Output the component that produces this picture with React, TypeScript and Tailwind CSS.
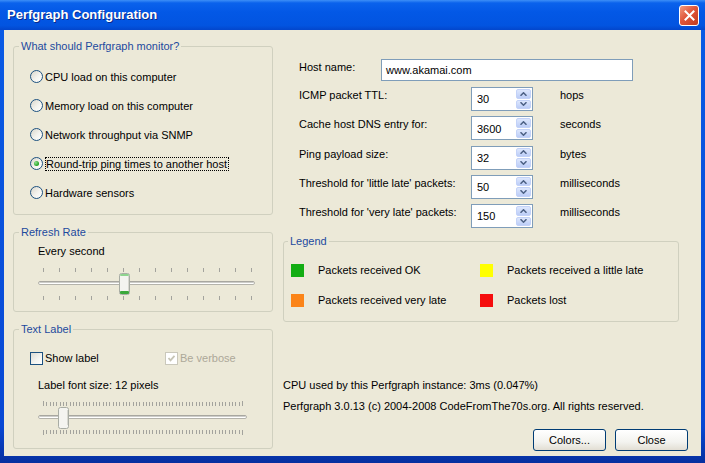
import React from 'react';

function Radio({ label, checked, focused }: { label: string; checked?: boolean; focused?: boolean }) {
  return (
    <div className="h-[29px] flex items-center gap-[2px] pl-[16px]">
      <span className="w-[13px] h-[13px] shrink-0 rounded-full border border-[#1c5180] bg-[linear-gradient(135deg,#d9d6cb,#f4f3ee_55%,#ffffff)] flex items-center justify-center">
        {checked && (
          <span className="w-[5px] h-[5px] rounded-full bg-[radial-gradient(circle_at_35%_35%,#8ee08e,#21a121_70%)]" />
        )}
      </span>
      {focused ? (
        <span className="border border-dotted border-black leading-[12px] pr-[1px]">{label}</span>
      ) : (
        <span className="leading-[14px]">{label}</span>
      )}
    </div>
  );
}

function Check({ label, checked, disabled }: { label: string; checked?: boolean; disabled?: boolean }) {
  return (
    <div className="flex items-center gap-[2px]">
      <span
        className={
          disabled
            ? 'w-[13px] h-[13px] shrink-0 border border-[#cac8bb] bg-white flex items-center justify-center'
            : 'w-[13px] h-[13px] shrink-0 border border-[#1c5180] bg-[linear-gradient(135deg,#dcdbd3,#f3f3ef_55%,#ffffff)] flex items-center justify-center'
        }
      >
        {checked && (
          <svg width="9" height="9" viewBox="0 0 9 9">
            <path d="M1.5 4 L3.5 6.3 L7.5 1.8" fill="none" stroke={disabled ? '#c7c5b6' : '#21a121'} strokeWidth="1.8" />
          </svg>
        )}
      </span>
      <span className={disabled ? 'text-[#aca899] leading-[14px]' : 'leading-[14px]'}>{label}</span>
    </div>
  );
}

function Trackbar({
  width,
  trackWidth,
  ticks,
  start,
  step,
  thumbX,
  plain,
}: {
  width: number;
  trackWidth: number;
  ticks: number;
  start: number;
  step: number;
  thumbX: number;
  plain?: boolean;
}) {
  const xs = Array.from({ length: ticks }, (_, i) => Math.round(start + i * step) + 0.5);
  return (
    <svg width={width} height={35} viewBox={`0 0 ${width} 35`} className="block">
      {xs.map((x, i) => {
        const end = i === 0 || i === ticks - 1;
        return (
          <g key={i} stroke="#a3a39d" strokeWidth="1">
            <line x1={x} y1={end && ticks > 20 ? 1 : 2} x2={x} y2={6} />
            <line x1={x} y1={30} x2={x} y2={end && ticks > 20 ? 35 : 34} />
          </g>
        );
      })}
      <rect x="0.5" y="15.5" width={trackWidth} height="3" rx="1.5" fill="#ffffff" stroke="#b4b3ab" />
      <line x1="1.5" y1="16" x2={trackWidth - 0.5} y2="16" stroke="#9c9b94" />
      <rect x={thumbX + 0.5} y="7.5" width="10" height="21" rx="2" fill="#f4f4f0" stroke="#a8aca4" />
      {!plain && <rect x={thumbX + 1} y="8" width="9" height="2" rx="1" fill="#8fd48f" />}
      {!plain && <rect x={thumbX + 1} y="25" width="9" height="3" rx="1" fill="#3ba83b" />}
      <line x1={thumbX + 9.5} y1="10" x2={thumbX + 9.5} y2="25" stroke="#d8d8d0" />
    </svg>
  );
}

function SpinBtn({ up }: { up?: boolean }) {
  return (
    <div className="flex-1 rounded-[2px] border border-[#c3d2f8] bg-[linear-gradient(to_bottom,#dde7fd,#bccdf7)] flex items-center justify-center">
      <svg width="7" height="4" viewBox="0 0 7 4">
        <path d={up ? 'M0.5 3.8 L3.5 0.8 L6.5 3.8' : 'M0.5 0.2 L3.5 3.2 L6.5 0.2'} fill="none" stroke="#4d6185" strokeWidth="1.5" />
      </svg>
    </div>
  );
}

function SpinRow({ label, value, unit }: { label: string; value: string; unit: string }) {
  return (
    <div className="h-[29.3px] flex items-start">
      <span className="w-[172px] pt-[1px] leading-[14px]">{label}</span>
      <div className="w-[62px] h-[24px] border border-[#7f9db9] bg-white flex">
        <span className="flex-1 pl-[5px] pt-[1px] flex items-center">{value}</span>
        <div className="w-[15px] mr-[1px] py-[1px] flex flex-col gap-[1px]">
          <SpinBtn up />
          <SpinBtn />
        </div>
      </div>
      <span className="ml-[27px] pt-[1px] leading-[14px]">{unit}</span>
    </div>
  );
}

function Swatch({ color, label, wide }: { color: string; label: string; wide?: boolean }) {
  return (
    <div className={wide ? 'w-[189px] flex items-center gap-[14px]' : 'flex items-center gap-[14px]'}>
      <span className={`w-[13px] h-[13px] shrink-0 ${color}`} />
      <span className="leading-[14px]">{label}</span>
    </div>
  );
}

export default function App() {
  return (
    <div className="w-[705px] h-[463px] flex flex-col overflow-hidden bg-[linear-gradient(to_bottom,#0a5ce6,#0848d4_92%,#062f9f)] font-['Liberation_Sans',Arial,sans-serif] text-[11px] text-black">
      {/* title bar */}
      <div className="h-[30px] shrink-0 flex items-center justify-between pl-[7px] pr-[6px] bg-[linear-gradient(to_bottom,#3d8ff7_0%,#0a62ec_10%,#0358e6_40%,#0254e0_85%,#0346cc_100%)]">
        <span className="text-white font-bold text-[13px] [text-shadow:1px_1px_0_#0a2a8a]">Perfgraph Configuration</span>
        <div className="w-[20px] h-[21px] rounded-[3px] border border-white bg-[linear-gradient(135deg,#f19b80,#e0563b_45%,#c33c1e)] flex items-center justify-center">
          <svg width="11" height="11" viewBox="0 0 11 11">
            <path d="M1.5 1.5 L9.5 9.5 M9.5 1.5 L1.5 9.5" stroke="white" strokeWidth="2" strokeLinecap="square" />
          </svg>
        </div>
      </div>

      {/* client area */}
      <div className="flex-1 mx-[4px] mb-[7px] bg-[#ece9d8] flex gap-[10px] pl-[9px] pt-[9px]">
        {/* left column */}
        <div className="w-[260px] flex flex-col gap-[10px]">
          <fieldset className="h-[176px] border border-[#d0d0bf] rounded-[3px]">
            <legend className="ml-[5px] px-[2px] leading-[14px] text-[#1d4a9e]">What should Perfgraph monitor?</legend>
            <div className="pt-[9px]">
              <Radio label="CPU load on this computer" />
              <Radio label="Memory load on this computer" />
              <Radio label="Network throughput via SNMP" />
              <Radio label="Round-trip ping times to another host" checked focused />
              <Radio label="Hardware sensors" />
            </div>
          </fieldset>

          <fieldset className="h-[87px] border border-[#d0d0bf] rounded-[3px]">
            <legend className="ml-[5px] px-[2px] leading-[14px] text-[#1d4a9e]">Refresh Rate</legend>
            <div className="pl-[24px] pt-[5px]">
              <div className="leading-[14px]">Every second</div>
              <div className="mt-[8px]">
                <Trackbar width={222} trackWidth={216} ticks={14} start={5} step={16} thumbX={81} />
              </div>
            </div>
          </fieldset>

          <fieldset className="h-[127px] border border-[#d0d0bf] rounded-[3px]">
            <legend className="ml-[5px] px-[2px] leading-[14px] text-[#1d4a9e]">Text Label</legend>
            <div className="pt-[15px]">
              <div className="pl-[16px] flex items-center">
                <div className="w-[135px]">
                  <Check label="Show label" />
                </div>
                <Check label="Be verbose" checked disabled />
              </div>
              <div className="pl-[24px] mt-[13px] leading-[14px]">Label font size: 12 pixels</div>
              <div className="pl-[24px] mt-[8px]">
                <Trackbar width={212} trackWidth={208} ticks={61} start={5} step={3.317} thumbX={20} plain />
              </div>
            </div>
          </fieldset>
        </div>

        {/* right column */}
        <div className="w-[405px] flex flex-col">
          <div className="pl-[16px] mt-[20px]">
            <div className="flex items-start">
              <span className="w-[82px] pt-[1px] leading-[14px]">Host name:</span>
              <div className="w-[252px] h-[22px] border border-[#7f9db9] bg-white px-[4px] flex items-center">www.akamai.com</div>
            </div>
            <div className="mt-[6px]">
              <SpinRow label="ICMP packet TTL:" value="30" unit="hops" />
              <SpinRow label="Cache host DNS entry for:" value="3600" unit="seconds" />
              <SpinRow label="Ping payload size:" value="32" unit="bytes" />
              <SpinRow label="Threshold for 'little late' packets:" value="50" unit="milliseconds" />
              <SpinRow label="Threshold for 'very late' packets:" value="150" unit="milliseconds" />
            </div>
          </div>

          <fieldset className="w-[396px] h-[88px] mt-[1px] border border-[#d0d0bf] rounded-[3px]">
            <legend className="ml-[4px] px-[2px] leading-[14px] text-[#1d4a9e]">Legend</legend>
            <div className="pl-[7px] pt-[7px]">
              <div className="h-[30px] flex items-center">
                <Swatch wide color="bg-[#13ad13]" label="Packets received OK" />
                <Swatch color="bg-[#ffff00]" label="Packets received a little late" />
              </div>
              <div className="h-[30px] flex items-center">
                <Swatch wide color="bg-[#fb8418]" label="Packets received very late" />
                <Swatch color="bg-[#f50d0d]" label="Packets lost" />
              </div>
            </div>
          </fieldset>

          <div className="mt-[56px] leading-[14px]">CPU used by this Perfgraph instance: 3ms (0.047%)</div>
          <div className="mt-[7px] leading-[14px]">Perfgraph 3.0.13 (c) 2004-2008 CodeFromThe70s.org. All rights reserved.</div>

          <div className="mt-[16px] flex justify-end gap-[9px]">
            <button className="w-[73px] h-[22px] rounded-[3px] border border-[#003c74] bg-[linear-gradient(to_bottom,#ffffff,#f3f3ef_60%,#e2ded3)] text-[11px] leading-[14px]">
              Colors...
            </button>
            <button className="w-[73px] h-[22px] rounded-[3px] border border-[#003c74] bg-[linear-gradient(to_bottom,#ffffff,#f3f3ef_60%,#e2ded3)] text-[11px] leading-[14px]">
              Close
            </button>
          </div>
        </div>
      </div>
    </div>
  );
}
